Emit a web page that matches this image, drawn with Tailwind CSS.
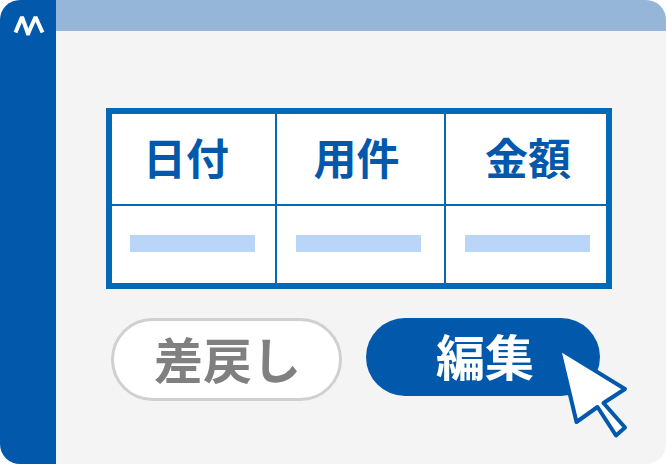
<!DOCTYPE html>
<html lang="ja">
<head>
    <meta charset="UTF-8">
    <title>編集</title>
    <script src="https://cdn.jsdelivr.net/npm/@tailwindcss/browser@4"></script>
</head>
<body class="bg-white">
    <div class="relative flex w-[666px] h-[464px] overflow-hidden rounded-[20px] bg-[#f4f4f4] font-['Noto_Sans_CJK_JP','Noto_Sans',sans-serif]">
        <aside class="w-[56px] shrink-0 bg-[#0259ac] pt-[14px] pl-[13px]">
            <svg width="32" height="24" viewBox="0 0 32 24" class="block" fill="none" stroke="#fff" stroke-width="4" stroke-linejoin="bevel">
                <path d="M2.5 18.5 L9 3 L15.5 21"/>
                <path d="M14.5 21 L22.5 3 L29.5 18.5"/>
            </svg>
        </aside>
        <div class="flex-1 flex flex-col">
            <div class="h-[31px] bg-[#95b5d9]"></div>
            <main class="pl-[50px] pt-[77px]">
                <div class="grid grid-cols-[163px_2px_167px_2px_160px] grid-rows-[90px_2px_77px] w-[506px] h-[181px] border-[6px] border-[#006ab8] bg-white text-[#0259ac] text-[43px] font-bold leading-none">
                    <div class="flex items-center justify-center pr-[15px] pb-[6px]">日付</div>
                    <div class="bg-[#006ab8]"></div>
                    <div class="flex items-center justify-center pr-[8px] pb-[6px]">用件</div>
                    <div class="bg-[#006ab8]"></div>
                    <div class="flex items-center justify-center pl-[4px] pb-[6px]">金額</div>
                    <div class="col-span-5 bg-[#006ab8]"></div>
                    <div class="flex items-center justify-center pb-[2px] pr-[2px]"><span class="w-[125px] h-[17px] bg-[#b9d5f8]"></span></div>
                    <div class="bg-[#006ab8]"></div>
                    <div class="flex items-center justify-center pb-[2px] pr-[4px]"><span class="w-[125px] h-[17px] bg-[#b9d5f8]"></span></div>
                    <div class="bg-[#006ab8]"></div>
                    <div class="flex items-center justify-center pb-[2px] pl-[3px]"><span class="w-[125px] h-[17px] bg-[#b9d5f8]"></span></div>
                </div>
                <div class="flex gap-[24px] mt-[29px] ml-[5px] text-[49px] font-bold leading-none">
                    <button class="w-[231px] h-[83px] rounded-full border-[3px] border-[#d0d0d0] bg-white text-[#808080] pl-[2px] pb-[4px]">差戻し</button>
                    <button class="w-[234px] h-[78px] rounded-full bg-[#0259ac] text-white pl-[4px] pb-[5px]">編集</button>
                </div>
            </main>
        </div>
        <svg class="absolute left-[540px] top-[330px]" width="126" height="134" viewBox="0 0 126 134" fill="#fff" stroke="#0259ac" stroke-width="4" stroke-linejoin="round">
            <path d="M19 18.6 L85 59 L63.5 73 L85 97.5 L76 105.5 L57.5 77 L36.5 92 Z"/>
        </svg>
    </div>
</body>
</html>
